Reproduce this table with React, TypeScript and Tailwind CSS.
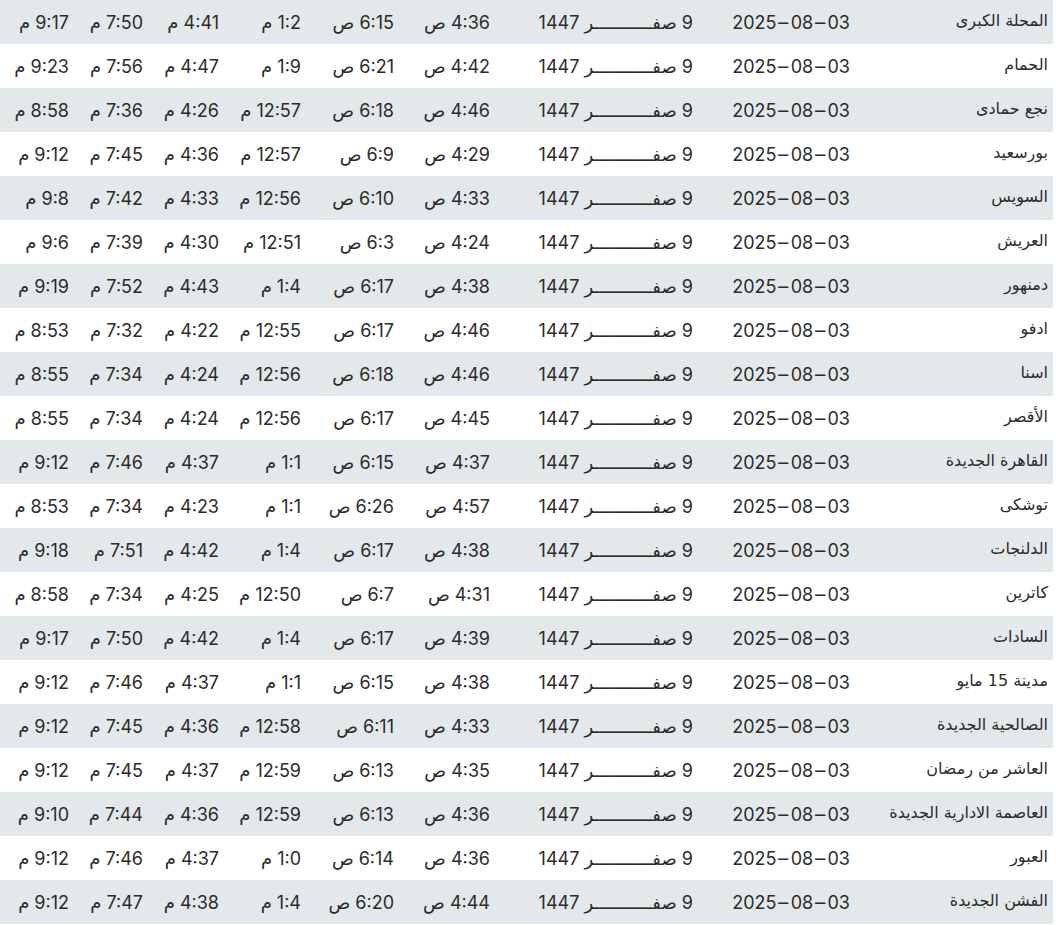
const rows: [string, string, string, string, string, string, string][] = [
  ['المحلة الكبرى', '4:36 ص', '6:15 ص', '1:2 م', '4:41 م', '7:50 م', '9:17 م'],
  ['الحمام', '4:42 ص', '6:21 ص', '1:9 م', '4:47 م', '7:56 م', '9:23 م'],
  ['نجع حمادى', '4:46 ص', '6:18 ص', '12:57 م', '4:26 م', '7:36 م', '8:58 م'],
  ['بورسعيد', '4:29 ص', '6:9 ص', '12:57 م', '4:36 م', '7:45 م', '9:12 م'],
  ['السويس', '4:33 ص', '6:10 ص', '12:56 م', '4:33 م', '7:42 م', '9:8 م'],
  ['العريش', '4:24 ص', '6:3 ص', '12:51 م', '4:30 م', '7:39 م', '9:6 م'],
  ['دمنهور', '4:38 ص', '6:17 ص', '1:4 م', '4:43 م', '7:52 م', '9:19 م'],
  ['ادفو', '4:46 ص', '6:17 ص', '12:55 م', '4:22 م', '7:32 م', '8:53 م'],
  ['اسنا', '4:46 ص', '6:18 ص', '12:56 م', '4:24 م', '7:34 م', '8:55 م'],
  ['الأقصر', '4:45 ص', '6:17 ص', '12:56 م', '4:24 م', '7:34 م', '8:55 م'],
  ['القاهرة الجديدة', '4:37 ص', '6:15 ص', '1:1 م', '4:37 م', '7:46 م', '9:12 م'],
  ['توشكى', '4:57 ص', '6:26 ص', '1:1 م', '4:23 م', '7:34 م', '8:53 م'],
  ['الدلنجات', '4:38 ص', '6:17 ص', '1:4 م', '4:42 م', '7:51 م', '9:18 م'],
  ['كاترين', '4:31 ص', '6:7 ص', '12:50 م', '4:25 م', '7:34 م', '8:58 م'],
  ['السادات', '4:39 ص', '6:17 ص', '1:4 م', '4:42 م', '7:50 م', '9:17 م'],
  ['مدينة 15 مايو', '4:38 ص', '6:15 ص', '1:1 م', '4:37 م', '7:46 م', '9:12 م'],
  ['الصالحية الجديدة', '4:33 ص', '6:11 ص', '12:58 م', '4:36 م', '7:45 م', '9:12 م'],
  ['العاشر من رمضان', '4:35 ص', '6:13 ص', '12:59 م', '4:37 م', '7:45 م', '9:12 م'],
  ['العاصمة الادارية الجديدة', '4:36 ص', '6:13 ص', '12:59 م', '4:36 م', '7:44 م', '9:10 م'],
  ['العبور', '4:36 ص', '6:14 ص', '1:0 م', '4:37 م', '7:46 م', '9:12 م'],
  ['الفشن الجديدة', '4:44 ص', '6:20 ص', '1:4 م', '4:38 م', '7:47 م', '9:12 م'],
];

const hijri = '9 صفـــــــــــر 1447';

function Dash() {
  return <span className="mx-[3px] inline-block scale-x-[1.8]">-</span>;
}

export default function App() {
  return (
    <div dir="rtl" className="w-[1053px] bg-white text-[#2b2b2b] font-['Inter','Noto_Sans','DejaVu_Sans',sans-serif]">
      {rows.map(([name, fajr, sunrise, dhuhr, asr, maghrib, isha], i) => (
        <div
          key={i}
          className={
            'grid h-11 grid-cols-[198px_157px_203px_96px_93px_82px_76px_74px_74px] items-center text-[18px] ' +
            (i % 2 === 0 ? 'bg-[#e3e8eb]' : 'bg-white')
          }
        >
          <div className="pr-[5px] pb-[2px] text-[16px] font-['DejaVu_Sans',sans-serif]">{name}</div>
          <div className="pr-[5px] text-right" dir="ltr">
            2025<Dash />08<Dash />03
          </div>
          <div className="pr-[5px]">{hijri}</div>
          <div className="pr-[5px]">{fajr}</div>
          <div className="pr-[5px]">{sunrise}</div>
          <div className="pr-[5px]">{dhuhr}</div>
          <div className="pr-[5px]">{asr}</div>
          <div className="pr-[5px]">{maghrib}</div>
          <div className="pr-[5px]">{isha}</div>
        </div>
      ))}
    </div>
  );
}
